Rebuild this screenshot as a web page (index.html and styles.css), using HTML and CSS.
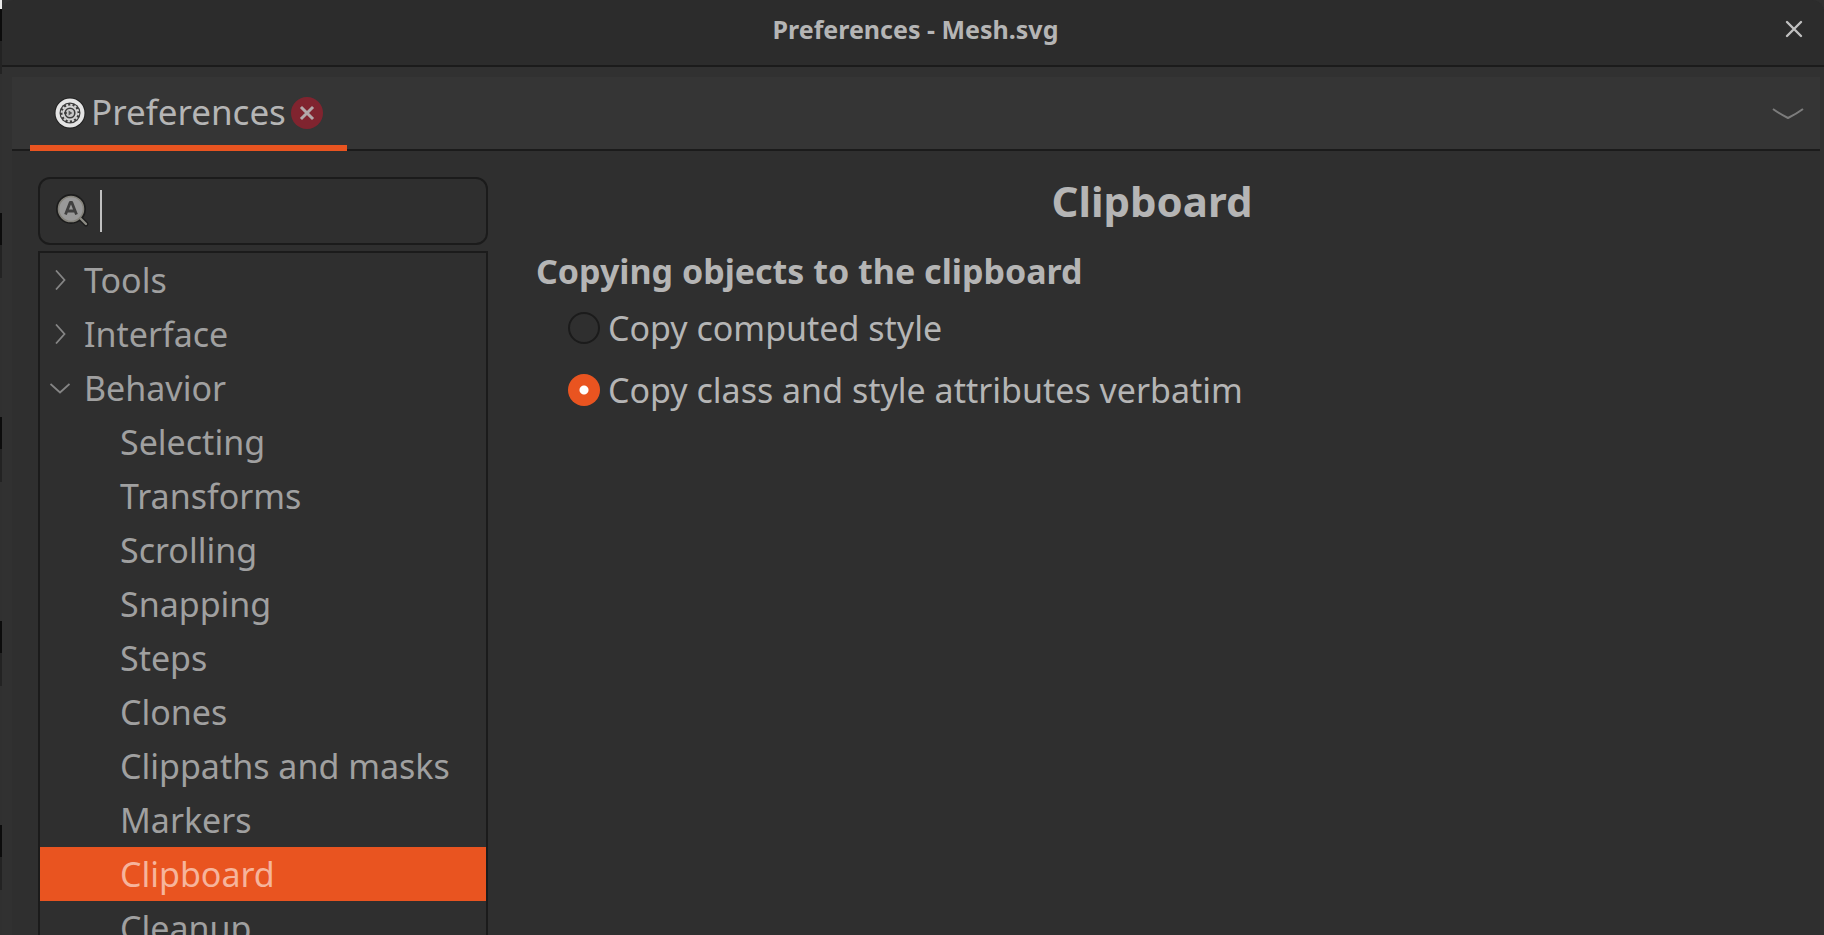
FILE: index.html
```html
<!DOCTYPE html>
<html lang="en">
<head>
<meta charset="utf-8">
<title>Preferences - Mesh.svg</title>
<link rel="stylesheet" href="styles.css">
</head>
<body>
<div class="window">
  <header class="titlebar">
    <h1 class="window-title">Preferences - Mesh.svg</h1>
    <button class="icon-button window-close" aria-label="Close window">
      <svg width="18" height="18" viewBox="0 0 18 18"><path d="M2 2L16 16M16 2L2 16" fill="none" stroke="#c0c0c0" stroke-width="2.4" stroke-linecap="round"/></svg>
    </button>
  </header>
  <div class="notebook">
    <nav class="tabbar">
      <div class="tab">
        <svg class="gear" width="32" height="32" viewBox="0 0 32 32">
          <circle cx="16" cy="16" r="15.5" fill="#202020"/>
          <circle cx="16" cy="16" r="14.5" fill="#e4e4e4"/>
          <circle cx="16" cy="16" r="10.5" fill="#3c3c3c"/>
          <circle cx="16" cy="16" r="8.3" fill="none" stroke="#d4d4d4" stroke-width="2" stroke-dasharray="2.3 2.046"/>
          <circle cx="16" cy="16" r="6.6" fill="none" stroke="#d4d4d4" stroke-width="2"/>
          <circle cx="16" cy="16" r="4" fill="#c8c8c8"/>
          <path d="M14.6 13.6L18.4 16L14.6 18.4Z" fill="#555"/>
          <path d="M10 16H13" stroke="#3c3c3c" stroke-width="1.5"/>
        </svg>
        <button class="tab-label">Preferences</button>
        <button class="icon-button" aria-label="Close tab">
          <svg width="32" height="32" viewBox="0 0 32 32"><circle cx="16" cy="16" r="16" fill="#80242f"/><path d="M11 11L21 21M21 11L11 21" stroke="#b2a9aa" stroke-width="3" stroke-linecap="square" fill="none"/></svg>
        </button>
      </div>
      <button class="icon-button" aria-label="Tab menu">
        <svg width="32" height="12" viewBox="0 0 32 12"><path d="M1 1C5 4 10 7 16 10C22 7 27 4 31 1" fill="none" stroke="#7c7c7c" stroke-width="2"/></svg>
      </button>
    </nav>
    <div class="page">
      <aside class="sidebar">
        <label class="search">
          <svg width="34" height="34" viewBox="0 0 34 34">
            <path d="M23 23L30 30" stroke="#1c1c1c" stroke-width="5" stroke-linecap="round"/>
            <circle cx="15" cy="15" r="15" fill="#1c1c1c"/>
            <path d="M23 23L30 30" stroke="#8c8b83" stroke-width="2.4" stroke-linecap="round"/>
            <circle cx="15" cy="15" r="12.5" fill="#999" stroke="#85837b" stroke-width="1.6"/>
            <path d="M9.5 20.5L14.2 8.5H15.8L20.5 20.5M11.5 17H18.5" fill="none" stroke="#404040" stroke-width="2.8" stroke-linejoin="round"/>
          </svg>
          <span class="caret"></span>
          <input class="search-input" type="text" aria-label="Search preferences">
        </label>
        <ul class="tree">
          <li><button class="row"><svg class="expander" width="20" height="20" viewBox="0 0 20 20"><path d="M6 0.5L14.5 10L6 19.5" fill="none" stroke="#858585" stroke-width="1.8"/></svg>Tools</button></li>
          <li><button class="row"><svg class="expander" width="20" height="20" viewBox="0 0 20 20"><path d="M6 0.5L14.5 10L6 19.5" fill="none" stroke="#858585" stroke-width="1.8"/></svg>Interface</button></li>
          <li><button class="row" aria-expanded="true"><svg class="expander" width="20" height="20" viewBox="0 0 20 20"><path d="M0.5 6L10 14.5L19.5 6" fill="none" stroke="#858585" stroke-width="1.8"/></svg>Behavior</button>
            <ul class="branch">
              <li><button class="row child">Selecting</button></li>
              <li><button class="row child">Transforms</button></li>
              <li><button class="row child">Scrolling</button></li>
              <li><button class="row child">Snapping</button></li>
              <li><button class="row child">Steps</button></li>
              <li><button class="row child">Clones</button></li>
              <li><button class="row child">Clippaths and masks</button></li>
              <li><button class="row child">Markers</button></li>
              <li><button class="row child selected">Clipboard</button></li>
              <li><button class="row child">Cleanup</button></li>
            </ul>
          </li>
        </ul>
      </aside>
      <main class="content">
        <h2 class="page-title">Clipboard</h2>
        <fieldset class="group">
          <legend class="group-title">Copying objects to the clipboard</legend>
          <label class="option"><input class="radio" type="radio" name="copy">Copy computed style</label>
          <label class="option"><input class="radio" type="radio" name="copy" checked>Copy class and style attributes verbatim</label>
        </fieldset>
      </main>
    </div>
  </div>
</div>
</body>
</html>
```
FILE: styles.css
```css
* { box-sizing: border-box; }

body {
  margin: 0;
  height: 100vh;
  overflow: hidden;
  padding-left: 2px;
  font-family: "Noto Sans", "Open Sans", sans-serif;
  font-size: 34px;
  color: #b5b5b5;
  background:
    linear-gradient(#e8e8e8, #e8e8e8) 0 0 / 2px 9px no-repeat,
    #303030 repeating-linear-gradient(#0c0c0c 0 32px, #232323 32px 65px, #303030 65px 204px) 0 9px;
}

button {
  border: 0;
  padding: 0;
  background: none;
  font: inherit;
  color: inherit;
}

ul {
  list-style: none;
  margin: 0;
  padding: 0;
}

svg { display: block; flex: none; }

.window {
  height: 100%;
  display: flex;
  flex-direction: column;
  overflow: hidden;
  background: #313131;
  border-radius: 12px 12px 0 0;
}

.titlebar {
  flex: none;
  display: grid;
  grid-template-columns: 1fr auto 1fr;
  align-items: center;
  height: 67px;
  padding: 0 21px 8px 26px;
  background: #2c2c2c;
  border-bottom: 2px solid #1b1b1b;
}

.window-title {
  grid-column: 2;
  margin: 0;
  font-size: 25px;
  font-weight: 700;
  line-height: 36px;
}

.window-close { justify-self: end; }

.notebook {
  flex: 1;
  min-height: 0;
  display: flex;
  flex-direction: column;
  margin: 10px 4px 0 10px;
  background: #2f2f2f;
}

.tabbar {
  flex: none;
  display: flex;
  align-items: center;
  justify-content: space-between;
  height: 74px;
  padding: 0 16px 0 18px;
  background: #353535;
  box-shadow: inset 0 -2px #1b1b1b;
}

.tab {
  display: flex;
  align-items: center;
  height: 100%;
  padding: 4px 24px 0;
  border-bottom: 6px solid #e95420;
}

.tab-label {
  margin: 0 5px 2px;
  font-size: 35px;
  line-height: 44px;
}

.page {
  flex: 1;
  min-height: 0;
  display: flex;
  gap: 12px;
  padding: 26px 16px 0 26px;
}

.sidebar {
  flex: none;
  width: 450px;
  display: flex;
  flex-direction: column;
  gap: 6px;
}

.search {
  flex: none;
  display: flex;
  align-items: center;
  height: 68px;
  padding: 0 16px;
  border: 2px solid #1b1b1b;
  border-radius: 12px;
}

.caret {
  width: 2px;
  height: 42px;
  margin-left: 10px;
  background: #c0c0c0;
}

.search-input {
  flex: 1;
  min-width: 0;
  border: 0;
  outline: 0;
  background: none;
  font: inherit;
  color: inherit;
}

.tree {
  flex: 1;
  min-height: 0;
  overflow: hidden;
  border: 2px solid #1b1b1b;
  border-bottom: 0;
  color: #a0a0a0;
}

.row {
  display: flex;
  align-items: center;
  gap: 14px;
  width: 100%;
  height: 54px;
  padding-left: 10px;
  text-align: left;
}

.child { padding-left: 80px; }

.selected {
  background: #e95420;
  color: #f6b49c;
}

.content { flex: 1; min-width: 0; }

.page-title {
  margin: 0;
  font-size: 42px;
  line-height: 48px;
  text-align: center;
}

.group {
  margin: 20px 0 0;
  padding: 0 0 0 68px;
  border: 0;
}

.group-title {
  margin-left: -32px;
  padding: 0;
  font-weight: 700;
  line-height: 52px;
}

.option {
  display: flex;
  align-items: center;
  gap: 8px;
  height: 62px;
}

.radio {
  appearance: none;
  flex: none;
  width: 32px;
  height: 32px;
  margin: 0;
  border: 2px solid #1b1b1b;
  border-radius: 50%;
}

.radio:checked {
  border: 0;
  background: radial-gradient(circle, #fff 4px, #e95420 5px);
}
```
